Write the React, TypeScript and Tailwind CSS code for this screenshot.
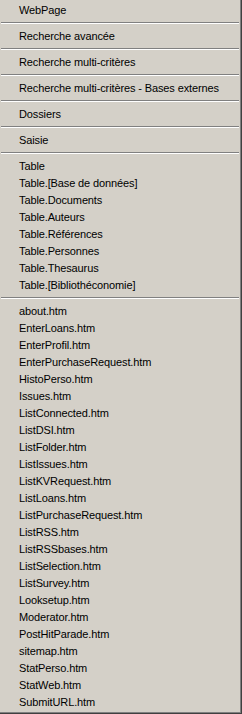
const topItems = [
  "WebPage",
  "Recherche avancée",
  "Recherche multi-critères",
  "Recherche multi-critères - Bases externes",
  "Dossiers",
  "Saisie",
];

const tables = [
  "Table",
  "Table.[Base de données]",
  "Table.Documents",
  "Table.Auteurs",
  "Table.Références",
  "Table.Personnes",
  "Table.Thesaurus",
  "Table.[Bibliothéconomie]",
];

const pages = [
  "about.htm",
  "EnterLoans.htm",
  "EnterProfil.htm",
  "EnterPurchaseRequest.htm",
  "HistoPerso.htm",
  "Issues.htm",
  "ListConnected.htm",
  "ListDSI.htm",
  "ListFolder.htm",
  "ListIssues.htm",
  "ListKVRequest.htm",
  "ListLoans.htm",
  "ListPurchaseRequest.htm",
  "ListRSS.htm",
  "ListRSSbases.htm",
  "ListSelection.htm",
  "ListSurvey.htm",
  "Looksetup.htm",
  "Moderator.htm",
  "PostHitParade.htm",
  "sitemap.htm",
  "StatPerso.htm",
  "StatWeb.htm",
  "SubmitURL.htm",
];

function Item({ label }: { label: string }) {
  return (
    <div className="h-[17px] pt-[2px] leading-[15px] pl-[18px] whitespace-nowrap cursor-default">
      {label}
    </div>
  );
}

function Separator() {
  return (
    <div className="h-[9px] pt-[4px]">
      <div className="h-[2px] border-t border-b border-t-[#808080] border-b-white" />
    </div>
  );
}

export default function App() {
  return (
    <div className="w-[242px] h-[714px] bg-[#d4d0c8] border-r border-b border-[#404040]">
      <div
        className="h-full border-r border-b border-[#808080] pl-[1px] pr-[1px] pt-[1px] text-[11px] text-black tracking-[-0.12px]"
        style={{ fontFamily: '"Liberation Sans", Arial, sans-serif' }}
      >
        {topItems.map((t) => (
          <div key={t}>
            <Item label={t} />
            <Separator />
          </div>
        ))}
        {tables.map((t) => (
          <Item key={t} label={t} />
        ))}
        <Separator />
        {pages.map((p) => (
          <Item key={p} label={p} />
        ))}
      </div>
    </div>
  );
}
